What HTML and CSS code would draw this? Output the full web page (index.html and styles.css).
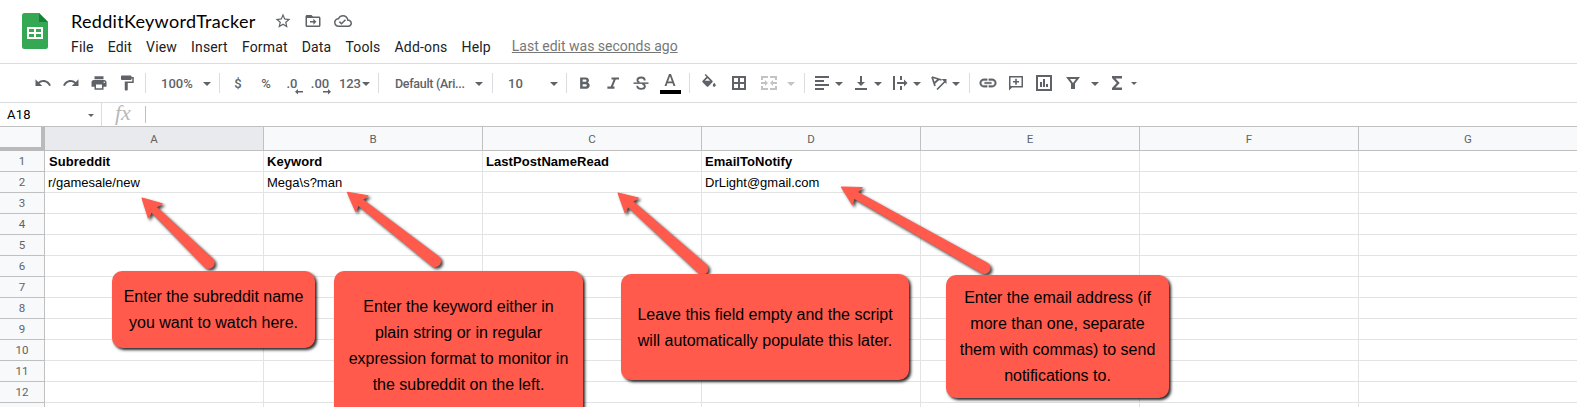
FILE: index.html
```html
<!DOCTYPE html>
<html lang="en">
<head>
<meta charset="utf-8">
<title>RedditKeywordTracker</title>
<link rel="stylesheet" href="styles.css">
</head>
<body>
<header class="header">
  <svg class="logo" viewBox="0 0 26 36"><path fill="#34a853" d="M2.500 0H17l9 9v24.500a2.500 2.500 0 0 1-2.500 2.500h-21A2.500 2.500 0 0 1 0 33.500V2.500A2.500 2.500 0 0 1 2.500 0z"/><path fill="#188038" d="M17 0l9 9h-9z"/><path fill="#fff" fill-rule="evenodd" d="M5 14h16v12H5zM7 16v3h5v-3zM14 16v3h5v-3zM7 21v3h5v-3zM14 21v3h5v-3z"/></svg>
  <div class="head-main">
    <div class="title-row">
      <h1 class="title">RedditKeywordTracker</h1>
      <svg class="i18 star" viewBox="0 0 24 24"><path d="M22 9.240l-7.190-.620L12 2 9.190 8.630 2 9.240l5.460 4.730L5.820 21 12 17.270 18.180 21l-1.630-7.030L22 9.240zM12 15.400l-3.760 2.270 1-4.280-3.320-2.880 4.380-.380L12 6.100l1.710 4.040 4.380.380-3.320 2.880 1 4.280L12 15.400z"/></svg>
      <svg class="i18 folder" viewBox="0 0 24 24"><path d="M20 6h-8l-2-2H4c-1.100 0-2 .900-2 2v12c0 1.100.900 2 2 2h16c1.100 0 2-.900 2-2V8c0-1.100-.900-2-2-2zm0 12H4V8h16v10zM12.500 17l4-4-4-4v3H8v2h4.500z"/></svg>
      <svg class="i18 cloud" viewBox="0 0 24 24"><path d="M19.350 10.040C18.670 6.590 15.640 4 12 4 9.110 4 6.600 5.640 5.350 8.040 2.340 8.360 0 10.910 0 14c0 3.310 2.690 6 6 6h13c2.760 0 5-2.240 5-5 0-2.640-2.050-4.780-4.650-4.960zM19 18H6c-2.210 0-4-1.790-4-4 0-2.050 1.530-3.760 3.560-3.970l1.070-.110.500-.950C8.080 7.140 9.940 6 12 6c2.620 0 4.880 1.860 5.390 4.430l.300 1.500 1.530.110c1.560.100 2.780 1.410 2.780 2.960 0 1.650-1.350 3-3 3zm-9-3.820l-2.090-2.090L6.500 13.500 10 17l6.010-6.010-1.410-1.410z"/></svg>
    </div>
    <nav class="menu">
      <span>File</span><span>Edit</span><span>View</span><span>Insert</span><span>Format</span><span>Data</span><span>Tools</span><span>Add-ons</span><span>Help</span>
      <a class="last-edit">Last edit was seconds ago</a>
    </nav>
  </div>
</header>

<div class="toolbar">
  <div class="group g1">
    <div class="tool"><svg class="i18" viewBox="0 0 24 24"><path d="M12.500 8c-2.650 0-5.050.990-6.900 2.600L2 7v9h9l-3.620-3.620c1.390-1.160 3.160-1.880 5.120-1.880 3.540 0 6.550 2.310 7.600 5.500l2.370-.780C21.080 11.030 17.150 8 12.500 8z"/></svg></div>
    <div class="tool"><svg class="i18" viewBox="0 0 24 24"><path d="M18.400 10.600C16.550 8.990 14.150 8 11.500 8c-4.650 0-8.580 3.030-9.960 7.220L3.900 16c1.050-3.190 4.050-5.500 7.600-5.500 1.950 0 3.730.720 5.120 1.880L13 16h9V7l-3.600 3.600z"/></svg></div>
    <div class="tool"><svg class="i18" viewBox="0 0 24 24"><path d="M19 8H5c-1.660 0-3 1.340-3 3v6h4v4h12v-4h4v-6c0-1.660-1.340-3-3-3zm-3 11H8v-5h8v5zm3-7a1 1 0 1 1 0-2 1 1 0 0 1 0 2zM18 3H6v4h12V3z"/></svg></div>
    <div class="tool"><svg class="i18" viewBox="0 0 24 24"><path d="M18 4V3c0-.550-.450-1-1-1H5c-.550 0-1 .450-1 1v4c0 .550.450 1 1 1h12c.550 0 1-.450 1-1V6h1v4H9v11c0 .550.450 1 1 1h2c.550 0 1-.450 1-1v-9h8V4h-3z"/></svg></div>
  </div>
  <i class="sep"></i>
  <div class="group g2"><span class="label">100%</span><b class="caret"></b></div>
  <i class="sep"></i>
  <div class="group g3">
    <div class="tool txt">$</div>
    <div class="tool txt">%</div>
    <div class="tool txt dec">.0<svg viewBox="0 0 8 6"><path d="M3 0v2h5v1.500H3V5.500L0 2.750z"/></svg></div>
    <div class="tool txt dec">.00<svg viewBox="0 0 8 6"><path d="M5 0v2H0v1.500h5V5.500l3-2.750z"/></svg></div>
    <div class="num"><span>123</span><b class="caret"></b></div>
  </div>
  <i class="sep"></i>
  <div class="group g4"><span class="label font">Default (Ari...</span><b class="caret"></b></div>
  <i class="sep"></i>
  <div class="group g5"><span class="label">10</span><b class="caret"></b></div>
  <i class="sep"></i>
  <div class="group g6">
    <div class="tool"><svg class="i18" viewBox="0 0 24 24"><path d="M15.600 11.490c.970-.670 1.650-1.770 1.650-2.790 0-2.260-1.750-4-4-4H5.500v15h8.540c2.090 0 4.210-1.700 4.210-4.290 0-1.520-.960-3.220-2.650-3.920zM8.800 7.400h3.700c.830 0 1.500.670 1.500 1.500s-.670 1.500-1.500 1.500H8.800v-3zm4 9.400h-4v-3.200h4c.830 0 1.600.670 1.600 1.600s-.770 1.600-1.600 1.600z"/></svg></div>
    <div class="tool"><svg class="i18" viewBox="0 0 24 24"><path d="M10 4.500v2.800h2.800L9 16.700H4.500v2.800H14v-2.800h-2.100l3.800-9.400H20V4.500z"/></svg></div>
    <div class="tool"><svg class="i18" viewBox="0 0 24 24"><path d="M2 11.200h20v2H2z"/><path fill="none" stroke="#5f6368" stroke-width="2.500" d="M17 8.500C17 6 15 4.600 12.200 4.600S7.200 6 7.200 8.200c0 1.500 1 2.500 2.600 3M14 13c2 .700 3.200 1.600 3.200 3.300 0 2.300-2.200 3.500-5 3.500s-5.200-1.200-5.200-4"/></svg></div>
    <div class="tool color"><svg viewBox="0 0 12 12"><path d="M5 0h2l4.500 12H9.500l-1-2.800h-5L2.500 12H.500zM4.100 7.500h3.800L6 2.200z"/></svg><i></i></div>
  </div>
  <i class="sep"></i>
  <div class="group g7">
    <div class="tool"><svg class="i18 fill" viewBox="0 0 24 24"><path d="M16.560 8.940L7.620 0 6.210 1.410l2.380 2.380-5.150 5.150c-.590.590-.590 1.540 0 2.120l5.500 5.500c.290.290.680.440 1.060.440s.770-.150 1.060-.440l5.500-5.500c.590-.580.590-1.530 0-2.120zM6.500 9L10 5.500 13.500 9zM19 11.500s-2 2.170-2 3.500c0 1.100.900 2 2 2s2-.900 2-2c0-1.330-2-3.500-2-3.500z"/></svg></div>
    <div class="tool"><svg class="i18" viewBox="0 0 18 18"><path fill-rule="evenodd" d="M2 2h14v14H2zM4 4v4h4V4zM10 4v4h4V4zM4 10v4h4v-4zM10 10v4h4v-4z"/></svg></div>
    <div class="tool faded"><svg class="i18" viewBox="0 0 18 18"><path d="M1 2h7v2H3v2H1zM10 2h7v4h-2V4h-5zM1 12h2v2h5v2H1zM15 12h2v4h-7v-2h5zM1 8h4V6l3 3-3 3v-2H1zM17 8h-4V6l-3 3 3 3v-2h4z"/></svg></div>
    <b class="caret faded"></b>
  </div>
  <i class="sep"></i>
  <div class="group g8">
    <div class="pair"><svg class="i18" viewBox="0 0 18 18"><path d="M2 2h14v2H2zM2 6h9v2H2zM2 10h14v2H2zM2 14h9v2H2z"/></svg><b class="caret"></b></div>
    <div class="pair"><svg class="i18" viewBox="0 0 18 18"><path d="M3 14h12v2H3zM8 2h2v6h3l-4 4-4-4h3z"/></svg><b class="caret"></b></div>
    <div class="pair"><svg class="i18" viewBox="0 0 18 18"><path d="M2 2h2v14H2zM9 2h2v4H9zM9 12h2v4H9zM6 8h7V5.500L16.500 9 13 12.500V10H6z"/></svg><b class="caret"></b></div>
    <div class="pair"><svg class="i18" viewBox="0 0 18 18"><path fill="none" stroke="#5f6368" stroke-width="1.700" d="M2 3l9.500 3M2 3l3 9M9 5L4.500 9M7 15.500l8-8"/><path d="M16.500 5v5l-5-5z"/></svg><b class="caret"></b></div>
  </div>
  <i class="sep"></i>
  <div class="group g9">
    <div class="tool"><svg class="i20" viewBox="0 0 24 24"><path stroke="#5f6368" stroke-width=".500" d="M3.900 12c0-1.710 1.390-3.100 3.100-3.100h4V7H7c-2.760 0-5 2.240-5 5s2.240 5 5 5h4v-1.900H7c-1.710 0-3.100-1.390-3.100-3.100zM8 13h8v-2H8v2zm9-6h-4v1.900h4c1.710 0 3.100 1.390 3.100 3.100s-1.390 3.100-3.100 3.100h-4V17h4c2.760 0 5-2.240 5-5s-2.240-5-5-5z"/></svg></div>
    <div class="tool"><svg class="i18" viewBox="0 0 18 18"><path fill-rule="evenodd" d="M2 2h14v11.500H5L2 16.500zM3.500 3.500V12h11V3.500zM8.200 4.800h1.600v2.200H12v1.600H9.800v2.200H8.200V8.600H6V7h2.200z"/></svg></div>
    <div class="tool"><svg class="i18" viewBox="0 0 18 18"><path fill-rule="evenodd" d="M1 1h16v16H1zM3 3v12h12V3zM5 8h2v5H5zM8 5h2v8H8zM11 10h2v3h-2z"/></svg></div>
    <div class="tool funnel"><svg class="i18" viewBox="0 0 18 18"><path fill-rule="evenodd" d="M2 3h14l-5 6.500V15H7V9.500zM6 5l3 4 3-4z"/></svg></div>
    <b class="caret c-filter"></b>
    <div class="tool sigma"><svg class="i18" viewBox="0 0 18 18"><path d="M4 2h10v2.500H7.500L11.700 9l-4.200 4.500H14V16H4v-2L8.700 9 4 4z"/></svg></div>
    <b class="caret small"></b>
  </div>
</div>

<div class="formula">
  <div class="namebox"><span>A18</span><b class="caret small"></b></div>
  <div class="fx">fx</div>
  <i class="cursor"></i>
</div>

<main class="sheet">
  <table class="cells">
    <tr class="cols"><th class="corner"></th><th class="active">A</th><th>B</th><th>C</th><th>D</th><th>E</th><th>F</th><th>G</th></tr>
    <tr class="bold"><th>1</th><td>Subreddit</td><td>Keyword</td><td>LastPostNameRead</td><td>EmailToNotify</td><td></td><td></td><td></td></tr>
    <tr><th>2</th><td>r/gamesale/new</td><td>Mega\s?man</td><td></td><td>DrLight@gmail.com</td><td></td><td></td><td></td></tr>
    <tr><th>3</th><td></td><td></td><td></td><td></td><td></td><td></td><td></td></tr>
    <tr><th>4</th><td></td><td></td><td></td><td></td><td></td><td></td><td></td></tr>
    <tr><th>5</th><td></td><td></td><td></td><td></td><td></td><td></td><td></td></tr>
    <tr><th>6</th><td></td><td></td><td></td><td></td><td></td><td></td><td></td></tr>
    <tr><th>7</th><td></td><td></td><td></td><td></td><td></td><td></td><td></td></tr>
    <tr><th>8</th><td></td><td></td><td></td><td></td><td></td><td></td><td></td></tr>
    <tr><th>9</th><td></td><td></td><td></td><td></td><td></td><td></td><td></td></tr>
    <tr><th>10</th><td></td><td></td><td></td><td></td><td></td><td></td><td></td></tr>
    <tr><th>11</th><td></td><td></td><td></td><td></td><td></td><td></td><td></td></tr>
    <tr><th>12</th><td></td><td></td><td></td><td></td><td></td><td></td><td></td></tr>
    <tr><th></th><td></td><td></td><td></td><td></td><td></td><td></td><td></td></tr>
  </table>
</main>

<svg class="arrows" viewBox="0 0 1577 407">
  <g class="arrow"><path transform="translate(142 198) rotate(44.200)" d="M0 0L18.500-10 16.500-3.500 93-5.500A5.500 5.500 0 0 1 93 5.500L16.500 3.500 18.500 10z"/></g>
  <g class="arrow"><path transform="translate(347.300 192.300) rotate(38.100)" d="M0 0L18.500-10 16.500-3.500 111.500-5.500A5.500 5.500 0 0 1 111.500 5.500L16.500 3.500 18.500 10z"/></g>
  <g class="arrow"><path transform="translate(618 193) rotate(41.900)" d="M0 0L18.500-10 16.500-3.500 113.500-5.500A5.500 5.500 0 0 1 113.500 5.500L16.500 3.500 18.500 10z"/></g>
  <g class="arrow"><path transform="translate(841.300 187) rotate(29.500)" d="M0 0L18.500-10 16.500-3.500 164.500-5.500A5.500 5.500 0 0 1 164.500 5.500L16.500 3.500 18.500 10z"/></g>
</svg>
<div class="note n1"><p>Enter the subreddit name<br>you want to watch here.</p></div>
<div class="note n2"><p>Enter the keyword either in<br>plain string or in regular<br>expression format to monitor in<br>the subreddit on the left.</p></div>
<div class="note n3"><p>Leave this field empty and the script<br>will automatically populate this later.</p></div>
<div class="note n4"><p>Enter the email address (if<br>more than one, separate<br>them with commas) to send<br>notifications to.</p></div>
</body>
</html>
```
FILE: styles.css
```css
* { box-sizing: border-box; }
html, body { margin: 0; width: 1577px; height: 407px; overflow: hidden; background: #fff; }
body { position: relative; font-family: Roboto, "Liberation Sans", sans-serif; color: #202124; }
svg { display: block; fill: #5f6368; flex: none; }
.i18 { width: 18px; height: 18px; }
.i20 { width: 20px; height: 20px; }

.header { display: flex; height: 64px; padding: 13px 0 0 22px; border-bottom: 1px solid #dadce0; }
.logo { width: 26px; height: 36px; margin-right: 23px; }
.head-main { margin-top: -5px; }
.title-row { display: flex; align-items: center; height: 27px; padding-bottom: 1px; }
.title { margin: 0; padding-bottom: 1px; width: 184px; font: 400 18px/24px Lato, sans-serif; letter-spacing: .3px; color: #000; white-space: nowrap; }
.star { margin-left: 19px; }
.folder { margin-left: 12px; }
.cloud { margin-left: 12px; }
.menu { display: flex; gap: 14px; align-items: baseline; height: 24px; font-size: 14px; line-height: 24px; letter-spacing: .170px; white-space: nowrap; }
.last-edit { margin: -1px 0 1px 7px; letter-spacing: 0; color: #777; text-decoration: underline; align-self: flex-start; }

.toolbar { display: flex; align-items: center; height: 39px; border-bottom: 1px solid #dadce0; font-size: 13px; font-weight: 500; color: #5f6368; }
.group { display: flex; align-items: center; height: 38px; flex: none; }
.sep { width: 1px; height: 20px; background: #dadce0; flex: none; }
.tool { display: flex; align-items: center; justify-content: center; width: 28px; height: 28px; flex: none; }
.label { white-space: nowrap; }
.font { font-size: 12.500px; letter-spacing: -.300px; }
.caret { width: 0; height: 0; border: 4px solid transparent; border-top-color: #5f6368; border-bottom: 0; flex: none; margin-top: 1px; }
.caret.small { border-width: 3px 3px 0; }
.faded { opacity: .38; }
.g1 { width: 145px; padding-left: 29px; }
.g2 { width: 73px; padding: 0 8px 0 15px; justify-content: space-between; }
.g3 { width: 158px; padding-left: 4px; }
.dec { position: relative; padding-right: 4px; }
.dec svg { position: absolute; width: 8px; height: 6px; right: 5px; bottom: 2px; }
.num { display: flex; align-items: center; gap: 1px; padding-left: 3px; letter-spacing: -.2px; }
.g4 { width: 113px; padding: 0 9px 0 16px; justify-content: space-between; }
.g5 { width: 73px; padding: 0 8px 0 15px; justify-content: space-between; }
.g6 { width: 122px; padding-left: 4px; }
.color { flex-direction: column; width: 30px; padding-top: 2px; }
.color svg { width: 12px; height: 12px; }
.color i { width: 21px; height: 4px; margin-top: 4px; background: #000; }
.g7 { width: 114px; padding-left: 4px; }
.g7 .tool { width: 30px; }
.g7 .caret { margin-left: 3px; }
.g8 { width: 164px; padding-left: 8px; }
.pair { display: flex; align-items: center; gap: 4px; width: 39px; }
.g9 { padding-left: 4px; }
.funnel { margin-left: 1px; }
.c-filter { margin-left: 4px; }
.sigma { margin-left: 4px; }

.formula { display: flex; align-items: center; height: 24px; border-bottom: 1px solid #c0c0c0; }
.namebox { display: flex; align-items: center; justify-content: space-between; width: 102px; height: 23px; padding: 0 7px 0 7px; border-right: 1px solid #dadce0; font-size: 13px; letter-spacing: .200px; color: #000; }
.fx { width: 43px; padding: 0 0 4px 13px; font: italic 22px/19px "Liberation Serif", serif; color: #b8b8b8; }
.cursor { width: 1px; height: 17px; background: #c0c0c0; }

.sheet { overflow: hidden; width: 1577px; height: 280px; }
.cells { table-layout: fixed; width: 1578px; border-collapse: separate; border-spacing: 0; }
.cells tr { height: 21px; }
.cells .cols { height: 24px; }
.cells th { padding: 0; border: solid #c0c0c0; border-width: 0 1px 1px 0; background: #f8f9fa; font: 400 11.500px/18px Roboto, sans-serif; color: #5f6368; }
.cells th:first-child { width: 45px; }
.cells .corner { border-right: 4px solid #bababa; border-bottom: 4px solid #bababa; }
.cells .active { background: #e8eaed; }
.cells td { height: 21px; padding: 1px 3px 0; border: solid #e2e3e3; border-width: 0 1px 1px 0; font: 13px/19px "Liberation Sans", Arial, sans-serif; color: #000; white-space: nowrap; }
.cells .bold td { font-weight: 700; letter-spacing: .06px; }
.cells .bold td:nth-child(2) { padding-left: 4px; }

.arrows { position: absolute; left: 0; top: 0; width: 1577px; height: 407px; }
.arrow { fill: #ff5a4c; stroke: #ff5a4c; stroke-width: 1; stroke-linejoin: round; filter: drop-shadow(2px 2px 1.500px rgba(0,0,0,.75)); }
.note { position: absolute; display: flex; align-items: center; justify-content: center; border-radius: 10px; background: #ff5a4c; box-shadow: 2px 2px 3px rgba(0,0,0,.85); font: 16px/26px "Liberation Sans", Arial, sans-serif; color: #000; text-align: center; white-space: nowrap; }
.note p { margin: 0; }
.n1 { left: 112px; top: 271px; width: 203px; height: 77px; }
.n2 { left: 334px; top: 271px; width: 249px; height: 149px; }
.n3 { left: 621px; top: 274px; width: 288px; height: 106px; padding-top: 2px; }
.n4 { left: 946px; top: 275px; width: 223px; height: 123px; }
```
